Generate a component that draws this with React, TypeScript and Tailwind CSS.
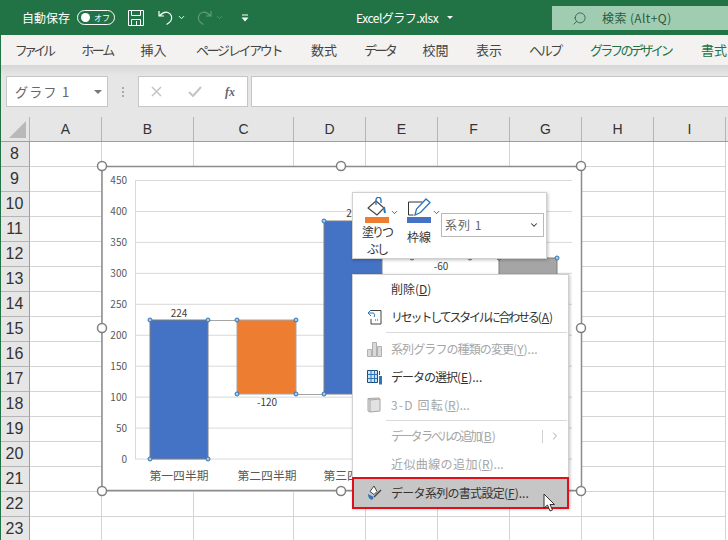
import type { ReactNode } from "react";
import { ChevronDown, ChevronRight, Search } from "lucide-react";

const jp = "font-['Noto_Sans_CJK_JP','Noto_Sans',sans-serif]";

const columns = [
  { name: "A", width: "w-[72px]" },
  { name: "B", width: "w-[92px]" },
  { name: "C", width: "w-[100px]" },
  { name: "D", width: "w-[72px]" },
  { name: "E", width: "w-[72px]" },
  { name: "F", width: "w-[72px]" },
  { name: "G", width: "w-[72px]" },
  { name: "H", width: "w-[72px]" },
  { name: "I", width: "w-[72px]" },
];
const rows = [8, 9, 10, 11, 12, 13, 14, 15, 16, 17, 18, 19, 20, 21, 22, 23];
const tabs = [
  { label: "ファイル", cls: "w-[67px] tracking-[-3.6px]" },
  { label: "ホーム", cls: "w-[60px] tracking-[-2.3px]" },
  { label: "挿入", cls: "w-[53px]" },
  { label: "ページ レイアウト", cls: "w-[117px] tracking-[-2.4px]" },
  { label: "数式", cls: "w-[54px]" },
  { label: "データ", cls: "w-[57px] tracking-[-2.6px]" },
  { label: "校閲", cls: "w-[55px]" },
  { label: "表示", cls: "w-[52px]" },
  { label: "ヘルプ", cls: "w-[60px] tracking-[-2.3px]" },
  { label: "グラフのデザイン", cls: "w-[111px] tracking-[-2.9px] text-[#217346]" },
  { label: "書式", cls: "w-[56px] text-[#217346]" },
];

function TitleBar() {
  return (
    <div className={`h-[35px] bg-[#217346] text-white flex items-center text-[12px] relative ${jp}`}>
      <span className="ml-[22px] w-[55px]">自動保存</span>
      <div className="w-[38px] h-[15px] rounded-full border border-white flex items-center px-[3px] justify-between">
        <div className="w-[9px] h-[9px] rounded-full bg-white"></div>
        <span className="text-[8px] leading-none pr-[1px]">オフ</span>
      </div>
      <svg width="16" height="16" viewBox="0 0 16 16" className="ml-[13px]" fill="none" stroke="#fff" strokeWidth="1">
        <path d="M.5.5h15v15H.5z" />
        <path d="M3.5.5v5h9v-5M3.5 15.5v-6h9v6M8.5 11v4" />
      </svg>
      <svg width="16" height="17" viewBox="0 0 16 17" className="ml-[14px]" fill="none" stroke="#fff" strokeWidth="1.2">
        <path d="M1 2v5h5M1.500 7C4 4 7 2.500 10 3.500c3.500 1.200 4.500 5 3 8-1 1.800-2.500 3-4.500 4" />
      </svg>
      <ChevronDown size={9} strokeWidth={2.5} className="ml-[3px]" />
      <svg width="16" height="17" viewBox="0 0 16 17" className="ml-[10px]" fill="none" stroke="#5d9b7b" strokeWidth="1.2">
        <path d="M15 2v5h-5M14.500 7C12 4 9 2.500 6 3.500c-3.500 1.200-4.500 5-3 8 1 1.800 2.500 3 4.500 4" />
      </svg>
      <ChevronDown size={9} strokeWidth={2} className="ml-[3px] text-[#5d9b7b]" />
      <svg width="8" height="8" viewBox="0 0 8 8" className="ml-[17px]" fill="#fff">
        <path d="M1 .5h6v1H1zM.5 3.500h7L4 7.500z" />
      </svg>
      <span className="ml-[107px] w-[88px] tracking-[-0.5px] whitespace-nowrap">Excelグラフ.xlsx</span>
      <div className="ml-[3px] w-0 h-0 border-x-[3px] border-x-transparent border-t-[3px] border-t-white"></div>
      <div className="absolute left-[552px] top-[6px] w-[176px] h-[24px] bg-[#a0cdb1] flex items-center text-[#2d5a44]">
        <Search size={15} strokeWidth={1.3} className="ml-[20px] -scale-x-100" />
        <span className="ml-[15px] tracking-[0.4px]">検索 (Alt+Q)</span>
      </div>
    </div>
  );
}

function TabBar() {
  return (
    <div className={`h-[30px] bg-[#f3f2f1] flex items-center text-[13px] text-[#444] overflow-hidden ${jp}`}>
      {tabs.map((t) => (
        <span key={t.label} className={`${t.cls} text-center shrink-0 whitespace-nowrap`}>
          {t.label}
        </span>
      ))}
    </div>
  );
}

function FormulaBar() {
  return (
    <div className="h-[52px] bg-gradient-to-b from-[#d6d6d6] from-0% to-[#e6e6e6] to-[20%] pt-[11px] flex items-start">
      <div className={`ml-[6px] w-[102px] h-[31px] bg-white border border-[#c6c6c6] flex items-center justify-between pl-[8px] pr-[5px] text-[13px] text-[#666] tracking-[1.3px] ${jp}`}>
        <span>グラフ 1</span>
        <div className="w-0 h-0 border-x-[4px] border-x-transparent border-t-[4px] border-t-[#777]"></div>
      </div>
      <div className="w-[30px] h-[31px] flex flex-col items-center justify-center gap-[2px]">
        <div className="w-[2px] h-[2px] bg-[#aaa]"></div>
        <div className="w-[2px] h-[2px] bg-[#aaa]"></div>
        <div className="w-[2px] h-[2px] bg-[#aaa]"></div>
      </div>
      <div className="w-[110px] h-[31px] bg-white border border-[#c6c6c6] flex items-center text-[#bbb]">
        <svg width="11" height="11" viewBox="0 0 11 11" className="ml-[12px]" stroke="#c4c4c4" strokeWidth="1.5">
          <path d="M1 1l9 9M10 1l-9 9" />
        </svg>
        <svg width="14" height="11" viewBox="0 0 14 11" className="ml-[26px]" fill="none" stroke="#c4c4c4" strokeWidth="2">
          <path d="M1 6l4 4 8-9" />
        </svg>
        <span className="ml-[23px] text-[12px] font-bold italic text-[#666] font-['Liberation_Serif',serif]">fx</span>
      </div>
      <div className="ml-[3px] flex-1 h-[31px] bg-white border-y border-l border-[#c6c6c6]"></div>
    </div>
  );
}

function Sheet() {
  return (
    <div className="bg-white font-['Liberation_Sans',sans-serif] flex-1 overflow-hidden">
      <div className="flex h-[25px] bg-[#e6e6e6] border-b border-[#9e9e9e]">
        <div className="w-[30px] relative border-r border-[#b5b5b5] shrink-0">
          <div className="absolute right-[3px] bottom-[3px] w-0 h-0 border-l-[17px] border-l-transparent border-b-[17px] border-b-[#b9b9b9]"></div>
        </div>
        {columns.map((c) => (
          <div key={c.name} className={`${c.width} shrink-0 border-r border-[#b5b5b5] text-center text-[14px] leading-[24px] text-[#333]`}>
            {c.name}
          </div>
        ))}
      </div>
      {rows.map((r) => (
        <div key={r} className="flex h-[25px]">
          <div className="w-[30px] shrink-0 bg-[#e6e6e6] border-r border-b border-r-[#9e9e9e] border-b-[#b5b5b5] text-center text-[16px] leading-[23px] text-[#333]">
            {r}
          </div>
          {columns.map((c) => (
            <div key={c.name} className={`${c.width} shrink-0 border-r border-b border-[#d4d4d4]`}></div>
          ))}
        </div>
      ))}
    </div>
  );
}

function Chart() {
  const ticks = [450, 400, 350, 300, 250, 200, 150, 100, 50, 0];
  const txt = "Noto Sans CJK JP, Noto Sans, sans-serif";
  const dot = (x: number, y: number) => (
    <circle key={`${x}-${y}`} cx={x} cy={y} r="2" fill="#a6cbe8" stroke="#2e75b6" strokeWidth="1" />
  );
  const ring = (x: number, y: number) => (
    <circle key={`r${x}-${y}`} cx={x} cy={y} r="4.5" fill="#fff" stroke="#7f7f7f" strokeWidth="1.5" />
  );
  return (
    <svg width="728" height="540" viewBox="0 0 728 540" className="absolute left-0 top-0 pointer-events-none">
      <rect x="102" y="166.5" width="479.5" height="324" fill="#fff" stroke="#8c8c8c" strokeWidth="1.5" />
      {ticks.map((t, i) => {
        const y = 180.5 + i * 30.95;
        return (
          <g key={t}>
            <line x1="135" x2="572" y1={y} y2={y} stroke="#d9d9d9" />
            <text x="127" y={y + 3.5} textAnchor="end" fontSize="10" fill="#595959" fontFamily={txt}>
              {t}
            </text>
          </g>
        );
      })}
      <line x1="135.5" x2="135.5" y1="180" y2="459" stroke="#d9d9d9" />
      <rect x="150" y="320" width="58" height="139" fill="#4472c4" stroke="#7f7f7f" />
      <rect x="237" y="320" width="59" height="74" fill="#ed7d31" stroke="#a5a5a5" />
      <rect x="324" y="221" width="58" height="173" fill="#4472c4" stroke="#7f7f7f" />
      <rect x="383" y="258" width="116" height="60" fill="#fff" />
      <rect x="499" y="258" width="58" height="80" fill="#a5a5a5" stroke="#7f7f7f" />
      <line x1="208" x2="237" y1="320.5" y2="320.5" stroke="#a5a5a5" />
      <line x1="296" x2="324" y1="394.5" y2="394.5" stroke="#a5a5a5" />
      {[dot(150, 320), dot(208, 320), dot(150, 459), dot(208, 459), dot(237, 320), dot(296, 320), dot(237, 394), dot(296, 394), dot(324, 394), dot(324, 221), dot(382, 221), dot(412, 258), dot(470, 258), dot(499, 258), dot(557, 258)]}
      <text x="179" y="317" textAnchor="middle" fontSize="10" fill="#404040" fontFamily={txt}>224</text>
      <text x="267" y="406" textAnchor="middle" fontSize="10" fill="#404040" fontFamily={txt}>-120</text>
      <text x="441" y="270" textAnchor="middle" fontSize="10" fill="#404040" fontFamily={txt}>-60</text>
      <text x="349" y="217" textAnchor="middle" fontSize="10" fill="#404040" fontFamily={txt}>2</text>
      <text x="179" y="480" textAnchor="middle" fontSize="11.8" fill="#595959" fontFamily={txt}>第一四半期</text>
      <text x="267" y="480" textAnchor="middle" fontSize="11.8" fill="#595959" fontFamily={txt}>第二四半期</text>
      <text x="353" y="480" textAnchor="middle" fontSize="11.8" fill="#595959" fontFamily={txt}>第三四半期</text>
      {[ring(102, 166), ring(341, 166), ring(581, 166), ring(102, 328), ring(581, 328), ring(102, 491), ring(341, 491), ring(581, 491)]}
    </svg>
  );
}

function MiniToolbar() {
  return (
    <div className={`absolute left-[352px] top-[192px] w-[195px] h-[67px] bg-white border border-[#d0d0d0] shadow-[1px_1px_3px_rgba(0,0,0,0.25)] flex text-[12px] text-[#333] ${jp}`}>
      <div className="w-[54px] pl-[9px] pt-[4px] flex flex-col">
        <div className="flex items-start">
          <div className="w-[24px] ml-[3px]">
            <svg width="24" height="19" viewBox="0 0 24 19" fill="none" stroke="#444" strokeWidth="1.1">
              <path d="M3 11l8-7 8 7-7 7z" strokeLinejoin="round" fill="#fff" />
              <path d="M11 8V3c0-3.500 5-3.500 5 0v3" stroke="#2e75b6" strokeWidth="1.3" />
              <path d="M19 10l1 6" stroke="#2e75b6" strokeWidth="2" />
            </svg>
            <div className="h-[6px] mt-[1px] bg-[#ed7d31]"></div>
          </div>
          <ChevronDown size={9} strokeWidth={2} className="mt-[11px] ml-[1px] shrink-0" />
        </div>
        <div className="text-center leading-[17px] w-[30px] tracking-[-2px] whitespace-nowrap">
          <div>塗りつ</div>
          <div>ぶし</div>
        </div>
      </div>
      <div className="w-[33px] pt-[4px] flex flex-col">
        <div className="flex items-start">
          <div className="w-[24px]">
            <svg width="24" height="19" viewBox="0 0 24 19" fill="none">
              <path d="M1.500 18V5h14M1.500 18h5" stroke="#333" />
              <path d="M8 18l1.500-6L19 2l4 3.500-9.500 10z" fill="#fff" stroke="#2e75b6" strokeWidth="1.3" />
            </svg>
            <div className="h-[6px] mt-[1px] bg-[#4472c4]"></div>
          </div>
          <ChevronDown size={9} strokeWidth={2} className="mt-[11px] ml-[1px] shrink-0" />
        </div>
        <div className="leading-[16px] mt-[6px] whitespace-nowrap">枠線</div>
      </div>
      <div className="ml-[1px] mt-[20px] w-[103px] h-[24px] border border-[#b9b9b9] flex items-center justify-between pl-[3px] pr-[4px] text-[#666] tracking-[1px]">
        <span>系列 1</span>
        <ChevronDown size={10} strokeWidth={2.5} className="text-[#333]" />
      </div>
    </div>
  );
}

type ItemProps = {
  label: string;
  hot: string;
  dots?: boolean;
  track?: string;
  dim?: boolean;
  icon?: ReactNode;
  arrow?: boolean;
  active?: boolean;
  tall?: boolean;
};

function Item({ label, hot, dots, track, dim, icon, arrow, active, tall }: ItemProps) {
  const rowCls = active
    ? "h-[30px] bg-[#c6c6c6] outline-2 -outline-offset-1 outline-[#e0101a]"
    : tall
      ? "h-[29px]"
      : "h-[28px]";
  return (
    <div className={`flex items-center ${rowCls}`}>
      <div className="w-[38px] pl-[14px] flex shrink-0">{icon}</div>
      <span className={`text-[12px] whitespace-nowrap ${dim ? "text-[#a6a6a6]" : "text-[#333]"}`}>
        <span className={track}>{label}</span>
        <span>
          (<u>{hot}</u>){dots ? "..." : ""}
        </span>
      </span>
      {arrow && (
        <div className="ml-auto flex items-center text-[#a6a6a6]">
          <div className="w-px h-[13px] bg-[#d0d0d0] mr-[6px]"></div>
          <ChevronRight size={12} className="mr-[7px]" />
        </div>
      )}
    </div>
  );
}

function Sep() {
  return <div className="ml-[33px] mr-[1px] my-[1px] h-px bg-[#d9d9d9]"></div>;
}

function ContextMenu() {
  return (
    <div className={`absolute left-[352px] top-[274px] w-[217px] h-[234px] bg-white border border-[#d0d0d0] shadow-[1px_1px_3px_rgba(0,0,0,0.25)] ${jp}`}>
      <Item label="削除" hot="D" />
      <Item
        label="リセットしてスタイルに合わせる"
        hot="A"
        track="tracking-[-2.2px]"
        icon={
          <svg width="15" height="16" viewBox="0 0 15 16" fill="none" stroke="#444">
            <path d="M4 1.500h10v13.500H4V10" />
            <path d="M1 4l3-3M1 4l3 3M1 4h5c2 0 2 3 1 4" stroke="#2e75b6" />
            <path d="M8 11h1M10 11h1" />
          </svg>
        }
      />
      <Sep />
      <Item
        dim
        tall
        dots
        label="系列グラフの種類の変更"
        hot="Y"
        track="tracking-[-0.9px]"
        icon={
          <svg width="16" height="16" viewBox="0 0 16 16" fill="#d9d9d9" stroke="#b0b0b0">
            <path d="M.5 8.500h4v7h-4zM5.500 1.500h4v14h-4zM10.500 5.500h4v10h-4z" />
          </svg>
        }
      />
      <Item
        dots
        label="データの選択"
        hot="E"
        track="tracking-[-1px]"
        icon={
          <svg width="16" height="15" viewBox="0 0 16 15" fill="none">
            <path d="M.5.500h10v12H.5z" fill="#cfe2f3" stroke="#1f4e79" />
            <path d="M.5 4.500h10M.5 8.500h10M4 .5v12M7.500.5v12" stroke="#2e75b6" />
            <path d="M12 6h3v8.500h-3z" fill="#2e75b6" />
            <path d="M12.500 1v4" stroke="#1f4e79" />
          </svg>
        }
      />
      <Item
        dim
        dots
        label="3-D 回転"
        hot="R"
        track="tracking-[1.2px]"
        icon={
          <svg width="14" height="16" viewBox="0 0 14 16" fill="#e2e2e2" stroke="#a6a6a6">
            <path d="M1 1.500l11-.5 1 1v12l-10 1-2-1z" />
            <path d="M3 15V3L1 1.500M3 3l10-1" fill="none" />
          </svg>
        }
      />
      <Sep />
      <Item dim arrow label="データ ラベルの追加" hot="B" track="tracking-[-2.2px]" />
      <Item dim dots label="近似曲線の追加" hot="R" track="tracking-[0.4px]" />
      <Item
        active
        dots
        label="データ系列の書式設定"
        hot="F"
        track="tracking-[-0.7px]"
        icon={
          <svg width="16" height="17" viewBox="0 0 16 17" fill="none">
            <path d="M3 6.500L7 1l3 5.500-3 3z" fill="#fff" stroke="#444" />
            <path d="M1 9c0 3 1 5 4 6 1-1 1.500-2 1.500-3z" fill="#2e75b6" />
            <path d="M7 12l7-7" stroke="#444" strokeWidth="1.5" />
          </svg>
        }
      />
    </div>
  );
}

function Cursor() {
  return (
    <svg width="14" height="20" viewBox="0 0 14 20" className="absolute left-[543px] top-[493px]">
      <path d="M1 1v14l3.500-3 2.500 6 2.500-1-2.500-5.500H11.500z" fill="#fff" stroke="#333" strokeWidth="1" />
    </svg>
  );
}

export default function App() {
  return (
    <div className="relative w-[728px] h-[540px] overflow-hidden flex flex-col bg-white">
      <TitleBar />
      <TabBar />
      <FormulaBar />
      <Sheet />
      <Chart />
      <MiniToolbar />
      <ContextMenu />
      <Cursor />
      <div className="absolute left-0 top-0 bottom-0 w-px bg-[#217346]"></div>
    </div>
  );
}
